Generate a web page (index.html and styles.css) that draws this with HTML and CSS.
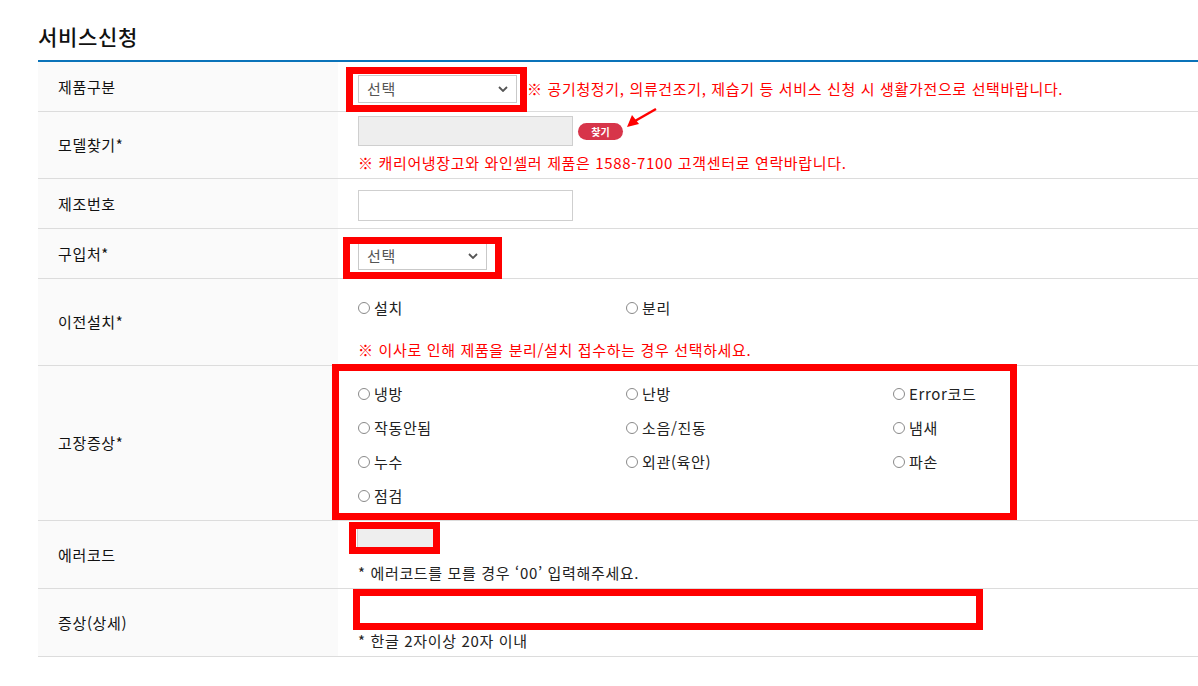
FILE: index.html
```html
<!DOCTYPE html>
<html lang="ko">
<head>
<meta charset="utf-8">
<title>서비스신청</title>
<link rel="stylesheet" href="styles.css">
</head>
<body>
<div class="page">
  <h2 class="title">서비스신청</h2>
  <div class="form">
    <div class="row r1">
      <div class="label">제품구분</div>
      <div class="cell">
        <div class="line">
          <span class="select sel-wide"><select><option>선택</option></select><svg class="chev" viewBox="0 0 10 6"><polyline points="1,1 5,5 9,1"/></svg></span>
          <span class="warn warn-inline">※ 공기청정기, 의류건조기, 제습기 등 서비스 신청 시 생활가전으로 선택바랍니다.</span>
        </div>
        <span class="mark m1"></span>
      </div>
    </div>

    <div class="row r2">
      <div class="label">모델찾기*</div>
      <div class="cell">
        <div class="line">
          <input class="input input-gray input-model" type="text">
          <button class="find" type="button">찾기</button>
        </div>
        <p class="warn">※ 캐리어냉장고와 와인셀러 제품은 1588-7100 고객센터로 연락바랍니다.</p>
        <svg class="arrow" viewBox="0 0 32 22"><line x1="30" y1="2" x2="9" y2="14"/><polygon points="1,20 6,8 13,17"/></svg>
      </div>
    </div>

    <div class="row r3">
      <div class="label">제조번호</div>
      <div class="cell">
        <input class="input input-serial" type="text">
      </div>
    </div>

    <div class="row r4">
      <div class="label">구입처*</div>
      <div class="cell">
        <span class="select sel-short"><select><option>선택</option></select><svg class="chev" viewBox="0 0 10 6"><polyline points="1,1 5,5 9,1"/></svg></span>
        <span class="mark m2"></span>
      </div>
    </div>

    <div class="row r5">
      <div class="label">이전설치*</div>
      <div class="cell">
        <div class="options">
          <label class="opt"><input type="radio" name="move">설치</label>
          <label class="opt"><input type="radio" name="move">분리</label>
        </div>
        <p class="warn note-move">※ 이사로 인해 제품을 분리/설치 접수하는 경우 선택하세요.</p>
      </div>
    </div>

    <div class="row r6">
      <div class="label">고장증상*</div>
      <div class="cell">
        <div class="options">
          <label class="opt"><input type="radio" name="sym">냉방</label>
          <label class="opt"><input type="radio" name="sym">난방</label>
          <label class="opt"><input type="radio" name="sym">Error코드</label>
          <label class="opt"><input type="radio" name="sym">작동안됨</label>
          <label class="opt"><input type="radio" name="sym">소음/진동</label>
          <label class="opt"><input type="radio" name="sym">냄새</label>
          <label class="opt"><input type="radio" name="sym">누수</label>
          <label class="opt"><input type="radio" name="sym">외관(육안)</label>
          <label class="opt"><input type="radio" name="sym">파손</label>
          <label class="opt"><input type="radio" name="sym">점검</label>
        </div>
        <span class="mark m3"></span>
      </div>
    </div>

    <div class="row r7">
      <div class="label">에러코드</div>
      <div class="cell">
        <input class="input input-gray input-code" type="text">
        <p class="note">* 에러코드를 모를 경우 ‘00’ 입력해주세요.</p>
        <span class="mark m4"></span>
      </div>
    </div>

    <div class="row r8">
      <div class="label">증상(상세)</div>
      <div class="cell">
        <input class="input input-detail" type="text">
        <p class="note">* 한글 2자이상 20자 이내</p>
        <span class="mark m5"></span>
      </div>
    </div>
  </div>
</div>
</body>
</html>
```

FILE: styles.css
```css
* { box-sizing: border-box; }
html, body { margin: 0; padding: 0; background: #fff; }
body {
  font-family: "Noto Sans CJK KR", "Noto Sans", sans-serif;
  font-size: 15px;
  letter-spacing: 0.65px;
  color: #222;
  overflow: hidden;
}
.page { padding: 21px 0 0 38px; }
.title {
  margin: 0 0 9px 0;
  font-size: 21px;
  line-height: 30px;
  font-weight: 500;
  color: #111;
}
.form { border-top: 2px solid #0a73b9; }
.row {
  display: grid;
  grid-template-columns: 300px 1fr;
  border-bottom: 1px solid #dcdcdc;
}
.label {
  background: #fafafa;
  display: flex;
  align-items: center;
  padding-left: 20px;
  line-height: 20px;
  color: #111;
}
.cell {
  position: relative;
  padding: 0 20px;
  line-height: 20px;
}
.line { display: flex; align-items: center; }

.r1 { height: 50px; }
.r1 .cell { padding-top: 13px; }
.r2 { height: 67px; }
.r2 .cell { padding-top: 4px; }
.r3 { height: 50px; }
.r3 .cell { padding-top: 11px; }
.r4 { height: 50px; }
.r4 .cell { padding-top: 13px; }
.r5 { height: 87px; }
.r5 .cell { padding-top: 19px; }
.r6 { height: 155px; }
.r6 .cell { padding-top: 18px; }
.r7 { height: 68px; }
.r7 .cell { padding-top: 7px; }
.r8 { height: 68px; }
.r8 .cell { padding-top: 6px; }

.select {
  position: relative;
  display: inline-block;
  height: 28px;
}
.select select {
  appearance: none;
  -webkit-appearance: none;
  width: 100%;
  height: 28px;
  border: 1px solid #c9c9c9;
  background: #fff;
  padding: 0 0 0 8px;
  font: inherit;
  letter-spacing: inherit;
  color: #555;
  border-radius: 0;
}
.sel-wide { width: 159px; }
.sel-short { width: 129px; }
.chev {
  position: absolute;
  right: 9px;
  top: 11px;
  width: 10px;
  height: 6px;
  fill: none;
  stroke: #555;
  stroke-width: 1.8;
  pointer-events: none;
}

.warn {
  color: #f00;
  margin: 0;
}
.warn-inline { margin-left: 10px; }
.r2 .warn { margin-top: 7px; }
.note-move { margin-top: 22px; }

.input {
  display: block;
  border: 1px solid #cfcfcf;
  background: #fff;
  font: inherit;
  padding: 0 6px;
  border-radius: 0;
}
.input-gray { background: #eee; }
.input-model { width: 215px; height: 30px; }
.input-serial { width: 215px; height: 31px; }
.input-code { width: 78px; height: 25px; margin-left: -1px; }
.input-detail { width: 620px; height: 30px; }

.find {
  margin-left: 5px;
  width: 45px;
  height: 17px;
  border: none;
  border-radius: 9px;
  background: #d7354a;
  color: #fff;
  font-family: inherit;
  font-size: 10px;
  font-weight: 700;
  letter-spacing: 0;
  line-height: 17px;
  padding: 0;
}

.arrow {
  position: absolute;
  left: 288px;
  top: -5px;
  width: 32px;
  height: 22px;
  stroke: #f00;
  stroke-width: 2.4;
  fill: #f00;
}
.arrow polygon { stroke: none; }

.options {
  display: grid;
  grid-template-columns: 268px 267px 1fr;
  row-gap: 14px;
}
.opt {
  display: flex;
  align-items: center;
  line-height: 20px;
  color: #222;
}
.opt input {
  appearance: none;
  -webkit-appearance: none;
  width: 12px;
  height: 12px;
  margin: 0 4px 0 0;
  border: 1px solid #8a8a8a;
  border-radius: 50%;
  background: #fff;
  flex: none;
}

.note {
  margin: 10px 0 0 0;
  color: #222;
}
.r8 .note { margin-top: 6px; }

.mark {
  position: absolute;
  border: 7px solid #f00;
  pointer-events: none;
}
.m1 { left: 8px; top: 5px; width: 181px; height: 45px; }
.m2 { left: 5px; top: 8px; width: 159px; height: 42px; }
.m3 { left: -6px; top: -2px; width: 685px; height: 156px; }
.m4 { left: 11px; top: 1px; width: 91px; height: 32px; }
.m5 { left: 15px; top: 0; width: 630px; height: 41px; }
```
